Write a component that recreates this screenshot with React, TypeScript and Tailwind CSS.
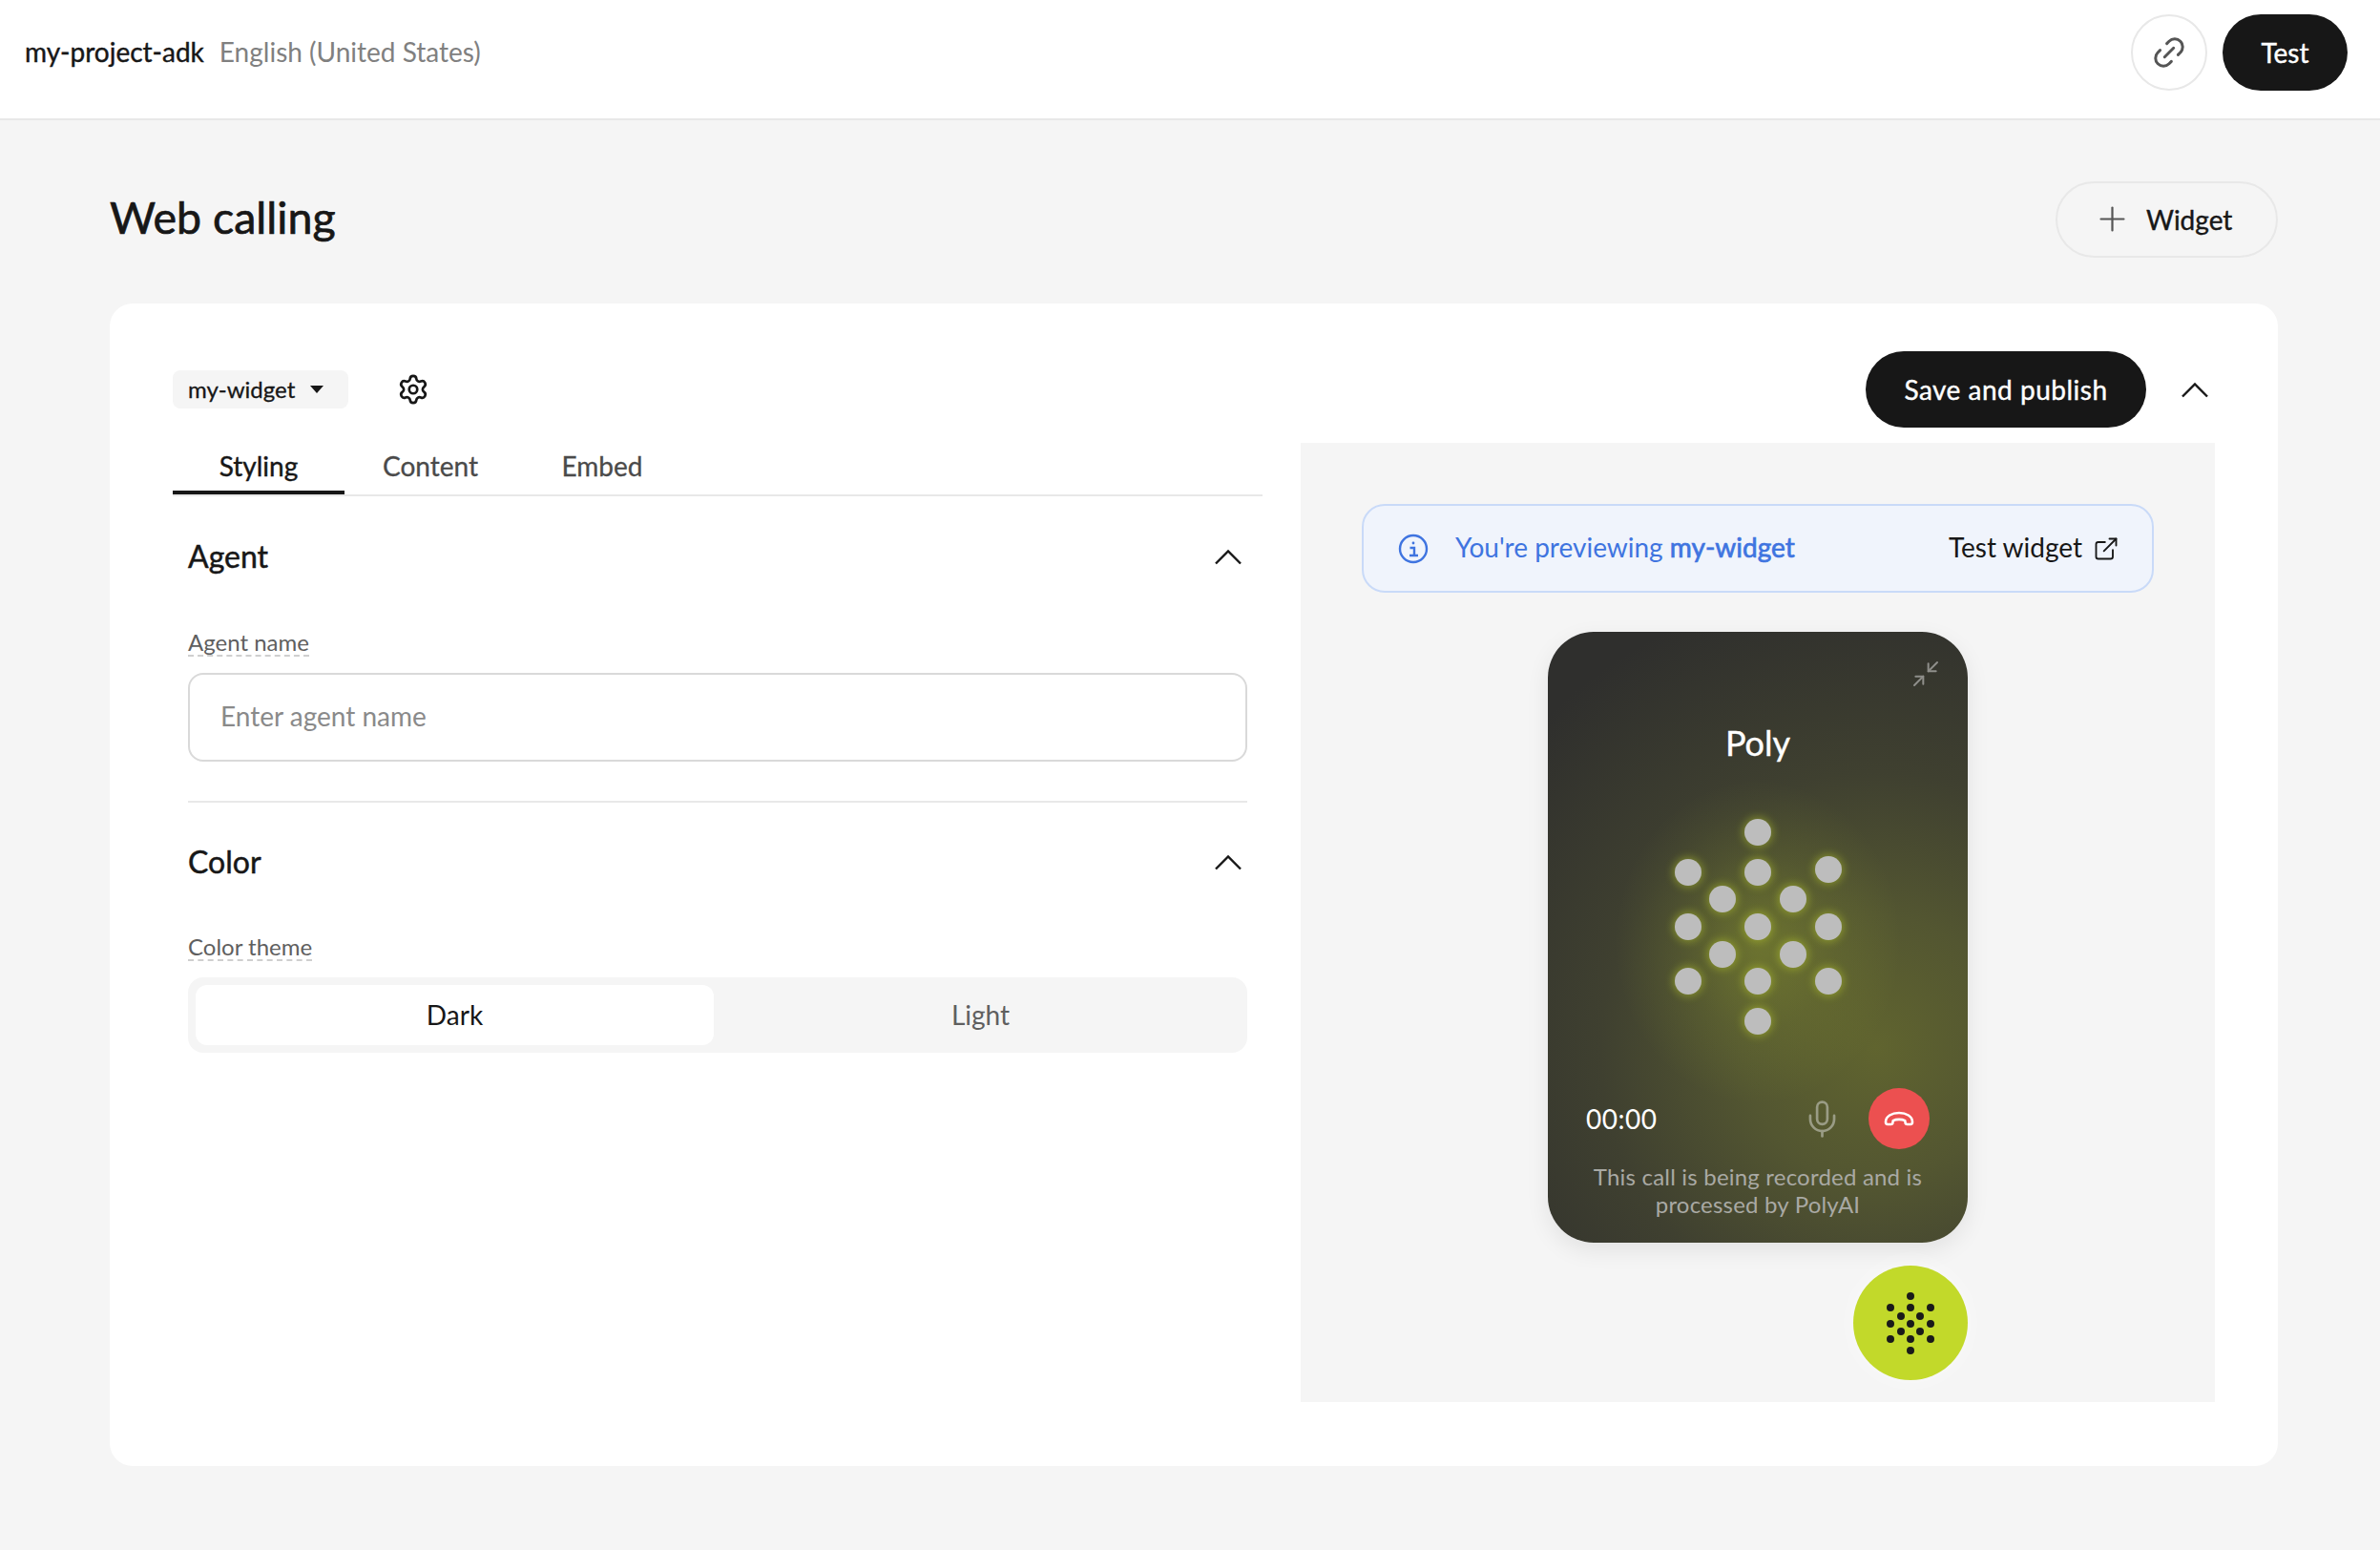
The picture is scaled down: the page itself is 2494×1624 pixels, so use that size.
import { Minimize2, Mic, Plus, ExternalLink, Link2, Settings } from "lucide-react";

const phoneDots: [number, number][] = [
  [90, 15], [17, 57], [90, 57], [164, 54], [53, 85], [127, 85], [17, 114], [90, 114], [164, 114], [53, 143], [127, 143], [17, 171], [90, 171], [164, 171], [90, 213],
];
const badgeDots: [number, number][] = [
  [21, 6], [0, 18], [21, 18], [42, 18], [11, 27], [31, 27], [0, 35], [21, 35], [42, 35], [11, 43], [31, 43], [0, 51], [21, 51], [42, 51], [21, 63],
];

function Chevron() {
  return (
    <svg width="30" height="17" viewBox="0 0 30 17" fill="none" stroke="#171717" strokeWidth="2.4">
      <path d="M2 15.5 15 2.5l13 13" />
    </svg>
  );
}

function SectionHead({ title }: { title: string }) {
  return (
    <div className="flex items-center justify-between pr-[5px]">
      <h2 className="text-[32px] leading-[40px] [-webkit-text-stroke:0.5px] text-[#171717]">{title}</h2>
      <Chevron />
    </div>
  );
}

function DashLabel({ text }: { text: string }) {
  return (
    <div className="flex">
      <span className="text-[24px] leading-[22px] pb-[2px] text-[#5f5f5f] border-b-2 border-dashed border-[#cfcfcf]">{text}</span>
    </div>
  );
}

export default function App() {
  return (
    <div className="w-[2494px] h-[1624px] bg-[#f5f5f5] font-['Lato','Liberation_Sans',sans-serif] text-[#171717] overflow-hidden">
      <header className="h-[126px] bg-white border-b-2 border-[#e8e8e8] flex items-center pl-[26px] pr-[34px] pb-[14px]">
        <span className="text-[28px] pb-[3px] [-webkit-text-stroke:0.4px]">my-project-adk</span>
        <span className="text-[28px] pb-[3px] text-[#808080] ml-[16px]">English (United States)</span>
        <div className="ml-auto flex items-center gap-[16px]">
          <button className="w-[80px] h-[80px] rounded-full border-2 border-[#e8e8e8] bg-white flex items-center justify-center">
            <Link2 className="w-[40px] h-[40px] text-[#555] -rotate-45" strokeWidth={1.8} />
          </button>
          <button className="w-[131px] h-[80px] rounded-full bg-[#171717] text-white text-[28px] [-webkit-text-stroke:0.4px]">Test</button>
        </div>
      </header>

      <main className="pl-[115px] pr-[107px]">
        <div className="h-[192px] flex items-center justify-between pt-[15px]">
          <h1 className="text-[46.5px] pb-[4px] [-webkit-text-stroke:0.7px] leading-none">Web calling</h1>
          <button className="w-[233px] h-[80px] rounded-full border-2 border-[#e8e8e8] flex items-center pl-[37px] gap-[15px] text-[28px] [-webkit-text-stroke:0.4px]">
            <Plus className="w-[41px] h-[41px] text-[#555]" strokeWidth={1.3} />
            Widget
          </button>
        </div>

        <section className="bg-white rounded-[24px] h-[1218px] pl-[66px] pr-[66px] pt-[50px] flex gap-[40px]">
          <div className="w-[1142px] shrink-0">
            <div className="h-[80px] flex items-center">
              <div className="w-[184px] h-[40px] bg-[#f5f5f5] rounded-[8px] flex items-center pl-[16px]">
                <span className="text-[24px] pb-[1px] [-webkit-text-stroke:0.3px]">my-widget</span>
                <span className="ml-[16px] w-0 h-0 border-x-[7px] border-x-transparent border-t-[8px] border-t-[#171717]" />
              </div>
              <Settings className="w-[34px] h-[34px] ml-[51px]" strokeWidth={1.9} />
            </div>
            <div className="flex border-b-2 border-[#e8e8e8] mt-[10px]">
              <div className="w-[180px] h-[60px] pt-[3px] flex items-center justify-center border-b-4 border-[#171717] text-[28px] [-webkit-text-stroke:0.4px]">Styling</div>
              <div className="w-[180px] h-[60px] pb-[1px] flex items-center justify-center text-[28px] [-webkit-text-stroke:0.3px] text-[#4a4a4a]">Content</div>
              <div className="w-[180px] h-[60px] pb-[1px] flex items-center justify-center text-[28px] [-webkit-text-stroke:0.3px] text-[#4a4a4a]">Embed</div>
            </div>
            <div className="pl-[16px] pr-[16px]">
              <div className="pt-[43px]">
                <SectionHead title="Agent" />
              </div>
              <div className="mt-[59px]"><DashLabel text="Agent name" /></div>
              <div className="mt-[17px] h-[93px] rounded-[16px] border-2 border-[#d9d9d9] flex items-center pl-[32px] pb-[3px] text-[28px] text-[#8a8a8a]">Enter agent name</div>
              <div className="mt-[41px] border-t-2 border-[#e8e8e8]" />
              <div className="pt-[42px]">
                <SectionHead title="Color" />
              </div>
              <div className="mt-[58px]"><DashLabel text="Color theme" /></div>
              <div className="mt-[17px] h-[79px] rounded-[16px] bg-[#f5f5f5] p-[8px] grid grid-cols-2 gap-[8px] text-[28px]">
                <div className="bg-white rounded-[12px] flex items-center justify-center pb-[2px]">Dark</div>
                <div className="flex items-center justify-center pb-[2px] text-[#5f5f5f]">Light</div>
              </div>
            </div>
          </div>

          <div className="flex-1 min-w-0">
            <div className="h-[96px] flex items-center justify-end gap-[36px] pb-[16px] pr-[6px]">
              <button className="w-[294px] h-[80px] rounded-full bg-[#171717] text-white text-[28px] tracking-[0.5px] [-webkit-text-stroke:0.4px]">Save and publish</button>
              <Chevron />
            </div>
            <div className="h-[1005px] bg-[#f5f5f5] pt-[64px] flex flex-col items-center">
              <div className="w-[830px] h-[93px] rounded-[24px] border-2 border-[#c9daf8] bg-[#f0f4fc] flex items-center pl-[36px] pr-[34px]">
                <svg width="32" height="32" viewBox="0 0 32 32" fill="none" stroke="#3f74e0" strokeWidth="2.4">
                  <circle cx="16" cy="16" r="14" />
                  <path d="M12.5 15H17v8M12 23h9" />
                  <circle cx="16" cy="10" r="1.4" fill="#3f74e0" stroke="none" />
                </svg>
                <span className="ml-[28px] pb-[3px] text-[28px] text-[#3f74e0]">You're previewing <span className="[-webkit-text-stroke:0.7px]">my-widget</span></span>
                <span className="ml-auto pb-[3px] text-[28px]">Test widget</span>
                <ExternalLink className="w-[28px] h-[28px] ml-[11px]" strokeWidth={1.6} />
              </div>

              <div className="mt-[41px] w-[440px] h-[640px] rounded-[48px] shadow-[0_8px_24px_rgba(0,0,0,0.08)] bg-[radial-gradient(circle_at_78%_68%,#60642f_0%,#535631_25%,#3f4030_52%,#2f2f2d_88%)] flex flex-col items-center">
                <div className="w-full flex justify-end pt-[28px] pr-[28px]">
                  <Minimize2 className="w-[32px] h-[32px] text-[#8f8f8b]" strokeWidth={1.5} />
                </div>
                <div className="mt-[34px] text-[36px] leading-[44px] [-webkit-text-stroke:0.4px] text-white">Poly</div>
                <svg width="181" height="228" viewBox="0 0 181 228" className="mt-[57px] overflow-visible">
                  <defs>
                    <radialGradient id="hal">
                      <stop offset="0%" stopColor="#c7dc2c" stopOpacity="0.24" />
                      <stop offset="55%" stopColor="#c7dc2c" stopOpacity="0.08" />
                      <stop offset="100%" stopColor="#c7dc2c" stopOpacity="0" />
                    </radialGradient>
                    <filter id="gl" x="-100%" y="-100%" width="300%" height="300%">
                      <feGaussianBlur stdDeviation="4" />
                    </filter>
                  </defs>
                  <ellipse cx="90" cy="130" rx="150" ry="170" fill="url(#hal)" />
                  {phoneDots.map(([x, y], i) => (
                    <circle key={i} cx={x} cy={y} r="16" fill="#c7dc2c" opacity="0.4" filter="url(#gl)" />
                  ))}
                  {phoneDots.map(([x, y], i) => (
                    <circle key={i} cx={x} cy={y} r="14" fill="#bdbdbd" />
                  ))}
                </svg>
                <div className="w-full flex items-center mt-[55px] pl-[40px] pr-[40px] h-[64px]">
                  <span className="text-[28px] pb-[1px] tracking-[0.5px] text-white">00:00</span>
                  <Mic className="ml-auto w-[43px] h-[43px] text-[#9a9c85]" strokeWidth={1.5} />
                  <div className="ml-[27px] w-[64px] h-[64px] rounded-full bg-[#ec5050] flex items-center justify-center">
                    <svg width="32" height="16" viewBox="0 0 32 16" fill="none" stroke="#fff" strokeWidth="2.6" strokeLinejoin="round">
                      <path d="M2 11.5C2 5.5 8.5 2 16 2s14 3.5 14 9.5c0 1.5-.8 2.5-2 2.5h-3.4c-1.2 0-2-.8-2.1-2l-.2-1.8c-1.9-.9-4-1.3-6.3-1.3s-4.4.4-6.3 1.3l-.2 1.8c-.1 1.2-.9 2-2.1 2H4c-1.2 0-2-1-2-2.5z" />
                    </svg>
                  </div>
                </div>
                <p className="mt-[14px] text-[24px] leading-[29px] tracking-[0.2px] text-[#a9a9a4] text-center w-[360px]">This call is being recorded and is processed by PolyAI</p>
              </div>

              <div className="mt-[24px] w-[440px] flex justify-end">
                <div className="w-[120px] h-[120px] rounded-full bg-[#c2d92a] shadow-[0_0_24px_rgba(255,255,255,0.5)] flex items-center justify-center">
                  <svg width="50" height="68" viewBox="-4 0 50 68" fill="#1a1a1a">
                    {badgeDots.map(([x, y], i) => (
                      <circle key={i} cx={x} cy={y} r="4" />
                    ))}
                  </svg>
                </div>
              </div>
            </div>
          </div>
        </section>
      </main>
    </div>
  );
}
